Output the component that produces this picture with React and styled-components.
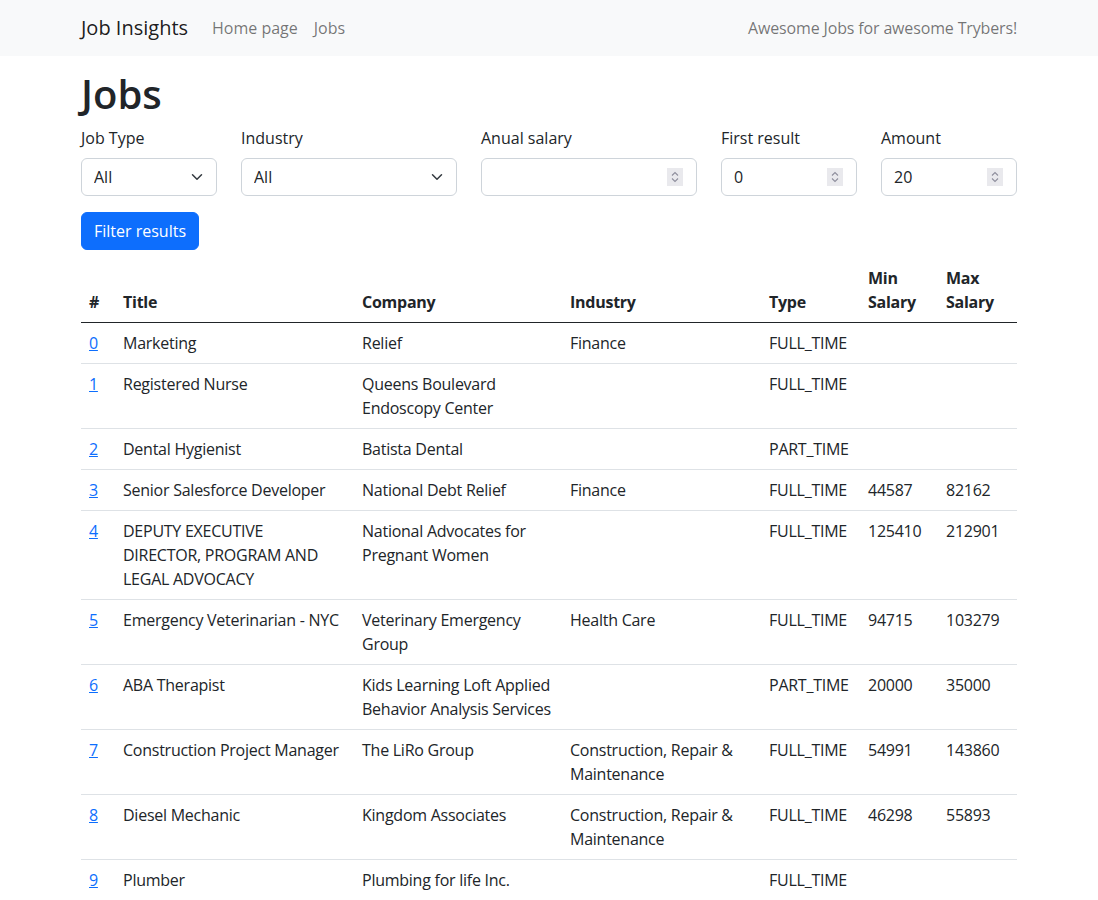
import React from 'react'
import styled, { createGlobalStyle } from 'styled-components'

const GlobalStyle = createGlobalStyle`
  *, *::before, *::after { box-sizing: border-box; }
  body {
    margin: 0;
    font-family: "Open Sans", "Noto Sans", "Liberation Sans", sans-serif;
    font-size: 16px;
    line-height: 1.5;
    color: #212529;
    background: #fff;
  }
`

const Navbar = styled.nav`
  background-color: #f8f9fa;
  height: 56px;
  display: flex;
  align-items: center;
`

const Container = styled.div`
  width: 960px;
  margin: 0 auto;
  padding: 0 12px;
`

const NavInner = styled(Container)`
  display: flex;
  align-items: center;
`

const Brand = styled.a`
  font-size: 20px;
  color: rgba(0, 0, 0, 0.9);
  text-decoration: none;
  margin-right: 16px;
`

const NavLink = styled.a`
  color: rgba(0, 0, 0, 0.55);
  text-decoration: none;
  padding: 8px;
`

const NavText = styled.span`
  margin-left: auto;
  color: rgba(0, 0, 0, 0.55);
  letter-spacing: -0.15px;
`

const Title = styled.h1`
  font-size: 40px;
  font-weight: 600;
  line-height: 1.2;
  margin: 14px 0 8px;
`

const FormRow = styled.div`
  display: grid;
  grid-template-columns: 136px 216px 216px 136px 136px;
  column-gap: 24px;
  margin-bottom: 16px;
`

const Label = styled.label`
  display: block;
  margin-bottom: 8px;
`

const Field = styled.div`
  position: relative;
`

const Select = styled.select`
  appearance: none;
  width: 100%;
  height: 38px;
  padding: 6px 36px 6px 12px;
  font: inherit;
  color: #212529;
  background: #fff;
  border: 1px solid #ced4da;
  border-radius: 6px;
`

const Chevron = styled.svg`
  position: absolute;
  right: 12px;
  top: 13px;
  width: 16px;
  height: 12px;
  pointer-events: none;
`

const NumberInput = styled.input`
  width: 100%;
  height: 38px;
  padding: 6px 34px 6px 12px;
  font: inherit;
  color: #212529;
  background: #fff;
  border: 1px solid #ced4da;
  border-radius: 6px;
  -moz-appearance: textfield;

  &::-webkit-inner-spin-button,
  &::-webkit-outer-spin-button {
    -webkit-appearance: none;
    margin: 0;
  }
`

const Spinner = styled.svg`
  position: absolute;
  right: 14px;
  top: 10px;
  width: 16px;
  height: 18px;
  pointer-events: none;
`

const Button = styled.button`
  font: inherit;
  color: #fff;
  background-color: #0d6efd;
  border: 1px solid #0d6efd;
  border-radius: 6px;
  padding: 6px 12px;
  height: 38px;
`

const Table = styled.table`
  width: 100%;
  margin-top: 8px;
  border-collapse: collapse;
  table-layout: fixed;
  letter-spacing: -0.25px;

  th, td {
    padding: 8px;
    text-align: left;
  }
  th {
    font-weight: 700;
    vertical-align: bottom;
    border-bottom: 1px solid #212529;
  }
  td {
    vertical-align: top;
    border-bottom: 1px solid #dee2e6;
  }
  td:nth-child(2) {
    padding-right: 12px;
  }
`

const IdLink = styled.a`
  color: #0d6efd;
  text-decoration: underline;
`

const jobs = [
  ['Marketing', 'Relief', 'Finance', 'FULL_TIME', '', ''],
  ['Registered Nurse', 'Queens Boulevard Endoscopy Center', '', 'FULL_TIME', '', ''],
  ['Dental Hygienist', 'Batista Dental', '', 'PART_TIME', '', ''],
  ['Senior Salesforce Developer', 'National Debt Relief', 'Finance', 'FULL_TIME', '44587', '82162'],
  ['DEPUTY EXECUTIVE DIRECTOR, PROGRAM AND LEGAL ADVOCACY', 'National Advocates for Pregnant Women', '', 'FULL_TIME', '125410', '212901'],
  ['Emergency Veterinarian - NYC', 'Veterinary Emergency Group', 'Health Care', 'FULL_TIME', '94715', '103279'],
  ['ABA Therapist', 'Kids Learning Loft Applied Behavior Analysis Services', '', 'PART_TIME', '20000', '35000'],
  ['Construction Project Manager', 'The LiRo Group', 'Construction, Repair & Maintenance', 'FULL_TIME', '54991', '143860'],
  ['Diesel Mechanic', 'Kingdom Associates', 'Construction, Repair & Maintenance', 'FULL_TIME', '46298', '55893'],
  ['Plumber', 'Plumbing for life Inc.', '', 'FULL_TIME', '', ''],
]

const SelectField = ({ id, label }) => (
  <div>
    <Label htmlFor={id}>{label}</Label>
    <Field>
      <Select id={id} defaultValue="All">
        <option>All</option>
      </Select>
      <Chevron viewBox="0 0 16 16">
        <path fill="none" stroke="#343a40" strokeLinecap="round" strokeLinejoin="round" strokeWidth="2" d="m2 5 6 6 6-6" />
      </Chevron>
    </Field>
  </div>
)

const NumberField = ({ id, label, value }) => (
  <div>
    <Label htmlFor={id}>{label}</Label>
    <Field>
      <NumberInput id={id} type="number" defaultValue={value} />
      <Spinner viewBox="0 0 16 18">
        <rect width="16" height="18" fill="#e9e9ed" />
        <path fill="none" stroke="#8f8f9d" strokeWidth="1.1" d="M5 7.5 8 4.5 11 7.5M5 10.5 8 13.5 11 10.5" />
      </Spinner>
    </Field>
  </div>
)

export default function App() {
  return (
    <>
      <GlobalStyle />
      <Navbar>
        <NavInner>
          <Brand href="#">Job Insights</Brand>
          <NavLink href="#">Home page</NavLink>
          <NavLink href="#">Jobs</NavLink>
          <NavText>Awesome Jobs for awesome Trybers!</NavText>
        </NavInner>
      </Navbar>
      <Container>
        <Title>Jobs</Title>
        <form onSubmit={(e) => e.preventDefault()}>
          <FormRow>
            <SelectField id="job_type" label="Job Type" />
            <SelectField id="industry" label="Industry" />
            <NumberField id="salary" label="Anual salary" value="" />
            <NumberField id="first_job" label="First result" value="0" />
            <NumberField id="amount" label="Amount" value="20" />
          </FormRow>
          <Button type="submit">Filter results</Button>
        </form>
        <Table>
          <colgroup>
            <col style={{ width: 34 }} />
            <col style={{ width: 239 }} />
            <col style={{ width: 208 }} />
            <col style={{ width: 199 }} />
            <col style={{ width: 99 }} />
            <col style={{ width: 78 }} />
            <col style={{ width: 79 }} />
          </colgroup>
          <thead>
            <tr>
              <th>#</th>
              <th>Title</th>
              <th>Company</th>
              <th>Industry</th>
              <th>Type</th>
              <th>Min Salary</th>
              <th>Max Salary</th>
            </tr>
          </thead>
          <tbody>
            {jobs.map((job, i) => (
              <tr key={i}>
                <td><IdLink href="#">{i}</IdLink></td>
                {job.map((cell, j) => <td key={j}>{cell}</td>)}
              </tr>
            ))}
          </tbody>
        </Table>
      </Container>
    </>
  )
}
